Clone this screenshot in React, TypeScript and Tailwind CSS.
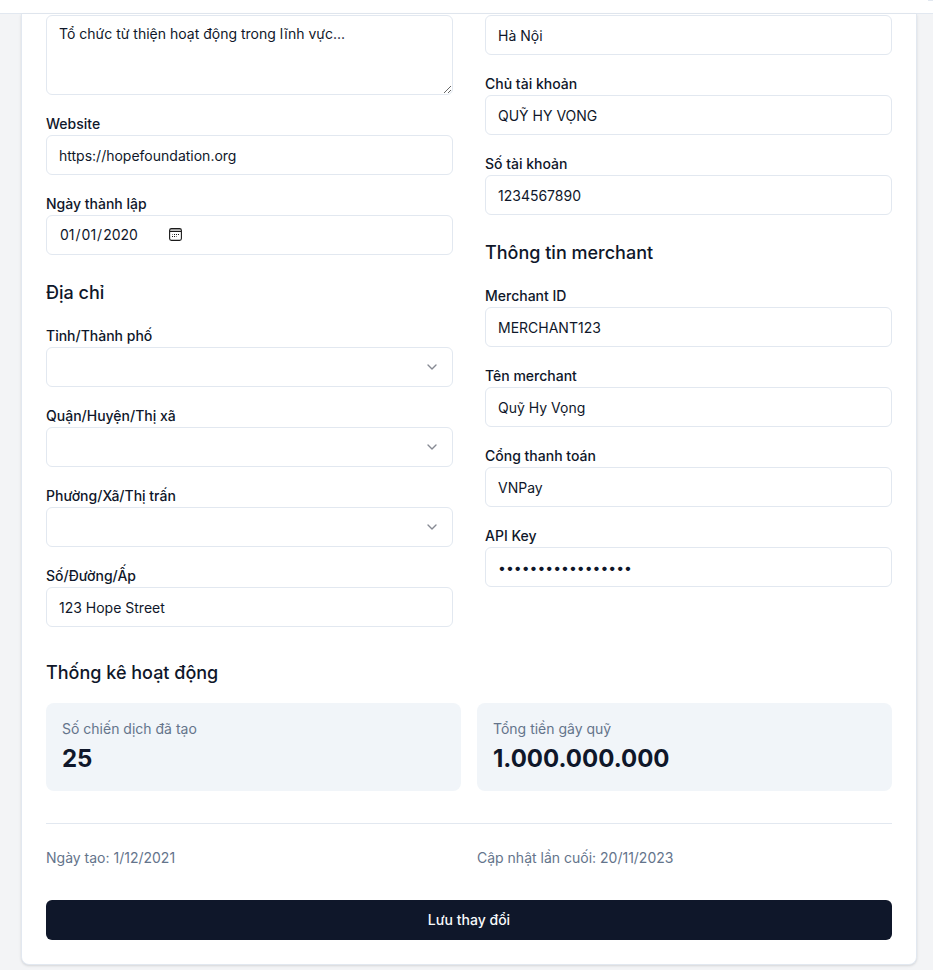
import { ChevronDown } from "lucide-react";
import type { ReactNode } from "react";

const control =
  "block w-full rounded-md border border-[#e2e8f0] bg-white px-3 py-2 text-sm text-[#0f172a] outline-none";

function Field({ label, children }: { label: string; children: ReactNode }) {
  return (
    <div className="leading-6">
      <label className="text-sm leading-none font-medium">{label}</label>
      {children}
    </div>
  );
}

function TextField({ label, value, type = "text" }: { label: string; value: string; type?: string }) {
  return (
    <Field label={label}>
      <input type={type} defaultValue={value} className={`${control} h-10`} />
    </Field>
  );
}

function CalendarIcon() {
  return (
    <svg width="13" height="13" viewBox="0 0 13 13" fill="none" className="shrink-0">
      <path d="M1 1h11v2H1z" fill="#c4c4c4" />
      <rect x="0.6" y="0.6" width="11.8" height="11.8" rx="1.8" stroke="#1a1a1a" strokeWidth="1.1" />
      <path d="M1 3.5h11" stroke="#1a1a1a" />
      <path d="M5 6.5h1M7 6.5h1M9 6.5h1M3 8.5h1M5 8.5h1" stroke="#1a1a1a" strokeWidth="1.2" />
      <path d="M3 6.5h1M7 8.5h1" stroke="#8a8a8a" />
    </svg>
  );
}

function DateField({ label, value }: { label: string; value: string }) {
  return (
    <Field label={label}>
      <div className={`${control} h-10`}>
        <div className="flex h-[21px] items-center">
          <input
            type="date"
            defaultValue={value}
            className="h-[22px] w-[110px] shrink-0 bg-transparent leading-5 outline-none [&::-webkit-calendar-picker-indicator]:hidden"
          />
          <CalendarIcon />
        </div>
      </div>
    </Field>
  );
}

function SelectField({ label }: { label: string }) {
  return (
    <Field label={label}>
      <button
        type="button"
        className="flex h-10 w-full items-center justify-end rounded-md border border-[#e2e8f0] bg-white px-3"
      >
        <ChevronDown className="h-4 w-4 opacity-50" />
      </button>
    </Field>
  );
}

function Section({ title, children }: { title: string; children: ReactNode }) {
  return (
    <section className="space-y-4">
      <h3 className="text-lg leading-7 font-medium">{title}</h3>
      {children}
    </section>
  );
}

function Stat({ label, value }: { label: string; value: string }) {
  return (
    <div className="rounded-lg bg-[#f1f5f9] p-4">
      <p className="text-sm text-[#64748b]">{label}</p>
      <p className="mt-1 text-2xl font-bold">{value}</p>
    </div>
  );
}

export default function App() {
  return (
    <div className="h-[970px] overflow-hidden bg-gray-100 font-['Inter','Noto_Sans',sans-serif] text-[#0f172a]">
      <header className="flex h-[14px] justify-end border-b border-[#e2e8f0] bg-white">
        <div className="h-px w-[5px] bg-[#e2e8f0]" />
      </header>
      <main className="ml-[21px] w-[896px] rounded-b-lg border border-t-0 border-[#e2e8f0] bg-white px-6 pt-px pb-6 shadow-sm">
        <div className="grid grid-cols-2 gap-8">
          <div className="space-y-6">
            <div className="space-y-4">
              <textarea defaultValue="Tổ chức từ thiện hoạt động trong lĩnh vực..." className={`${control} h-20`} />
              <TextField label="Website" value="https://hopefoundation.org" />
              <DateField label="Ngày thành lập" value="2020-01-01" />
            </div>
            <Section title="Địa chỉ">
              <SelectField label="Tỉnh/Thành phố" />
              <SelectField label="Quận/Huyện/Thị xã" />
              <SelectField label="Phường/Xã/Thị trấn" />
              <TextField label="Số/Đường/Ấp" value="123 Hope Street" />
            </Section>
          </div>
          <div className="space-y-6">
            <div className="space-y-4">
              <input defaultValue="Hà Nội" className={`${control} h-10`} />
              <TextField label="Chủ tài khoản" value="QUỸ HY VỌNG" />
              <TextField label="Số tài khoản" value="1234567890" />
            </div>
            <Section title="Thông tin merchant">
              <TextField label="Merchant ID" value="MERCHANT123" />
              <TextField label="Tên merchant" value="Quỹ Hy Vọng" />
              <TextField label="Cổng thanh toán" value="VNPay" />
              <TextField label="API Key" value="sk_test_123456789" type="password" />
            </Section>
          </div>
        </div>
        <div className="mt-8">
          <Section title="Thống kê hoạt động">
            <div className="grid grid-cols-2 gap-4">
              <Stat label="Số chiến dịch đã tạo" value="25" />
              <Stat label="Tổng tiền gây quỹ" value="1.000.000.000" />
            </div>
          </Section>
        </div>
        <div className="mt-8 grid grid-cols-2 gap-4 border-t border-[#e2e8f0] pt-6 text-sm text-[#64748b]">
          <p>Ngày tạo: 1/12/2021</p>
          <p>Cập nhật lần cuối: 20/11/2023</p>
        </div>
        <button type="button" className="mt-8 h-10 w-full rounded-md bg-[#0f172a] text-sm font-medium text-[#f8fafc]">
          Lưu thay đổi
        </button>
      </main>
    </div>
  );
}
